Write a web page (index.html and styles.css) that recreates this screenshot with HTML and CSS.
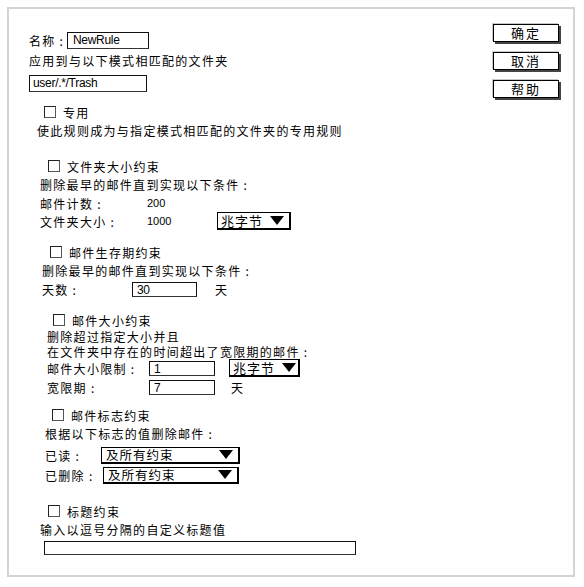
FILE: index.html
```html
<!DOCTYPE html>
<html lang="zh">
<head>
<meta charset="utf-8">
<title>规则</title>
<link rel="stylesheet" href="styles.css">
</head>
<body>
<div class="frame">
  <div class="main">
    <div class="row x29" style="margin-top:22px"><span class="lab w38">名称 :</span><span class="field f-name">NewRule</span></div>
    <div class="row x29 g2">应用到与以下模式相匹配的文件夹</div>
    <div class="row x29 g5"><span class="field f-pat">user/.*/Trash</span></div>

    <div class="row x44 g11"><span class="cb"></span><span class="cbl">专用</span></div>
    <div class="row x37 g0">使此规则成为与指定模式相匹配的文件夹的专用规则</div>

    <div class="row x48 g18"><span class="cb"></span><span class="cbl">文件夹大小约束</span></div>
    <div class="row x40 g0">删除最早的邮件直到实现以下条件 :</div>
    <div class="row x40 g1"><span class="lab w107">邮件计数 :</span><span class="num">200</span></div>
    <div class="row x40 g0"><span class="lab w107">文件夹大小 :</span><span class="num w70">1000</span><span class="dd dd-a">兆字节<span class="tri"></span></span></div>

    <div class="row x50 g13"><span class="cb"></span><span class="cbl">邮件生存期约束</span></div>
    <div class="row x42 g0">删除最早的邮件直到实现以下条件 :</div>
    <div class="row x42 g1"><span class="lab w90">天数 :</span><span class="field f-num">30</span><span class="unit u18">天</span></div>

    <div class="row x53 g13"><span class="cb"></span><span class="cbl">邮件大小约束</span></div>
    <div class="para x47">删除超过指定大小并且<br>在文件夹中存在的时间超出了宽限期的邮件 :</div>
    <div class="row x47 g0"><span class="lab w102">邮件大小限制 :</span><span class="field f-num2">1</span><span class="dd dd-b">兆字节<span class="tri"></span></span></div>
    <div class="row x47 g1"><span class="lab w102">宽限期 :</span><span class="field f-num2">7</span><span class="unit u16">天</span></div>

    <div class="row x52 g10"><span class="cb"></span><span class="cbl">邮件标志约束</span></div>
    <div class="row x45 g0">根据以下标志的值删除邮件 :</div>
    <div class="row x45 g4"><span class="lab w56">已读 :</span><span class="sel s1">及所有约束<span class="tri"></span></span></div>
    <div class="row x45 g2"><span class="lab w58">已删除 :</span><span class="sel s2">及所有约束<span class="tri"></span></span></div>

    <div class="row x48 g18"><span class="cb"></span><span class="cbl">标题约束</span></div>
    <div class="row x40 g0">输入以逗号分隔的自定义标题值</div>
    <div class="row x44 g1"><span class="field f-hdr"></span></div>
  </div>
  <div class="side">
    <div class="btn">确定</div>
    <div class="btn">取消</div>
    <div class="btn">帮助</div>
  </div>
</div>
</body>
</html>
```

FILE: styles.css
```css
html, body { margin: 0; padding: 0; background: #fff; }
body {
  font-family: "Noto Sans CJK SC", "Liberation Sans", sans-serif;
  font-size: 12px;
  color: #000;
}
.frame {
  box-sizing: border-box;
  margin: 7px 0 0 7px;
  width: 568px;
  height: 570px;
  border: 2px solid #d4d4d4;
  display: flex;
}
.main { flex: 1; }
.side {
  width: 80px;
  padding-top: 15px;
  display: flex;
  flex-direction: column;
  gap: 10px;
}
.row {
  height: 18px;
  display: flex;
  align-items: center;
  letter-spacing: 1.3px;
  white-space: nowrap;
}
.para {
  line-height: 15px;
  letter-spacing: 1.3px;
  margin-top: 0;
  white-space: nowrap;
}
.x29 { padding-left: 20px; }
.x37 { padding-left: 28px; }
.x40 { padding-left: 31px; }
.x42 { padding-left: 33px; }
.x44 { padding-left: 35px; }
.x45 { padding-left: 36px; }
.x47 { padding-left: 38px; }
.x48 { padding-left: 39px; }
.x50 { padding-left: 41px; }
.x52 { padding-left: 43px; }
.x53 { padding-left: 44px; }
.g0 { margin-top: 0; }
.g1 { margin-top: 1px; }
.g2 { margin-top: 2px; }
.g4 { margin-top: 4px; }
.g5 { margin-top: 5px; }
.g10 { margin-top: 10px; }
.g11 { margin-top: 11px; }
.g13 { margin-top: 13px; }
.g18 { margin-top: 18px; }

.lab { display: inline-block; flex: none; }
.w38 { width: 38px; }
.w56 { width: 56px; }
.w58 { width: 58px; }
.w90 { width: 90px; }
.w102 { width: 102px; }
.w107 { width: 107px; }
.w70 { width: 70px; }

.num {
  font-family: "Liberation Sans", sans-serif;
  font-size: 11px;
  letter-spacing: 0;
  display: inline-block;
}
.field {
  box-sizing: border-box;
  display: inline-block;
  height: 16px;
  line-height: 14px;
  border: 1px solid #111;
  border-bottom-color: #333;
  font-family: "Liberation Sans", sans-serif;
  font-size: 12px;
  letter-spacing: -0.3px;
  padding-left: 4px;
  flex: none;
}
.f-name { width: 82px; height: 17px; padding-left: 5px; }
.f-pat { width: 118px; height: 17px; padding-left: 3px; }
.f-num { width: 65px; height: 15px; line-height: 13px; padding-top: 1px; }
.f-num2 { width: 66px; height: 15px; line-height: 13px; padding-top: 1px; }
.f-hdr { width: 312px; height: 14px; }

.unit { display: inline-block; }
.u18 { margin-left: 18px; }
.u16 { margin-left: 16px; }

.cb {
  box-sizing: border-box;
  display: inline-block;
  width: 12px;
  height: 12px;
  border: 1px solid #222;
  border-right-color: #555;
  border-bottom-color: #555;
  flex: none;
}
.cbl { margin-left: 7px; }

.dd, .sel {
  box-sizing: border-box;
  display: inline-flex;
  align-items: center;
  border: 1px solid #000;
  border-right-width: 2px;
  border-bottom-width: 2px;
  flex: none;
  padding-left: 3px;
  letter-spacing: 1px;
}
.dd { height: 18px; font-size: 13px; }
.dd-a { width: 74px; }
.dd-b { width: 71px; margin-left: 14px; }
.sel { height: 17px; justify-content: space-between; padding-left: 4px; padding-right: 5px; font-size: 12.5px; }
.s1 { width: 139px; }
.s2 { width: 136px; }
.tri {
  display: inline-block;
  width: 0;
  height: 0;
  border-left: 7px solid transparent;
  border-right: 7px solid transparent;
  border-top: 9px solid #000;
  margin-left: 7px;
}

.btn {
  box-sizing: border-box;
  width: 66px;
  height: 18px;
  border: 1px solid #000;
  box-shadow: -1px -1px 0 #c8c8c8, 2px 2px 0 #444;
  text-align: center;
  font-size: 13px;
  line-height: 16px;
  letter-spacing: 2px;
}
```
